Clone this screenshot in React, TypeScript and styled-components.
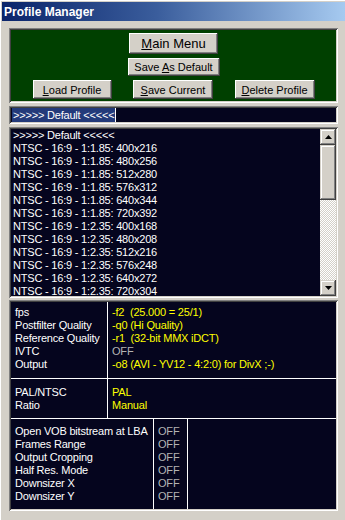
import React from 'react'
import styled, { createGlobalStyle } from 'styled-components'

const GlobalStyle = createGlobalStyle`
  html, body {
    margin: 0;
    padding: 0;
    background: #d4d0c8;
  }
  body {
    font-family: 'Liberation Sans', Arial, sans-serif;
  }
`

const sunken = `
  box-shadow: inset 1px 1px #808080, inset -1px -1px #ffffff,
    inset 2px 2px #404040, inset -2px -2px #d4d0c8;
`

const Window = styled.div`
  width: 345px;
  height: 520px;
  box-sizing: border-box;
  padding: 2px 0 0 2px;
  background: #d4d0c8;
  box-shadow: inset 1px 1px #ffffff;
  overflow: hidden;
  display: flex;
  flex-direction: column;
`

const TitleBar = styled.div`
  height: 19px;
  flex: none;
  display: flex;
  align-items: center;
  padding-left: 2px;
  background: linear-gradient(90deg, #0a246a 0%, #3a5d9c 45%, #a6caf0 100%);
  color: #ffffff;
  font-weight: bold;
  font-size: 12px;
`

const Body = styled.div`
  display: flex;
  flex-direction: column;
  gap: 3px;
  padding: 7px 7px 0 7px;
`

const GreenPanel = styled.div`
  height: 75px;
  box-sizing: border-box;
  padding: 5px 2px 4px;
  background: #004000;
  ${sunken}
  display: flex;
  flex-direction: column;
  align-items: center;
  gap: 4px;
`

const ButtonRow = styled.div`
  width: 100%;
  display: flex;
  justify-content: space-evenly;
`

const Button = styled.button<{ $w: number; $h: number; $big?: boolean }>`
  width: ${p => p.$w}px;
  height: ${p => p.$h}px;
  padding: 0;
  border: none;
  background: #d4d0c8;
  color: #000000;
  font-family: 'Liberation Sans', Arial, sans-serif;
  font-size: ${p => (p.$big ? 13 : 11)}px;
  box-shadow: inset -1px -1px #404040, inset 1px 1px #ffffff,
    inset -2px -2px #808080, inset 2px 2px #d4d0c8;
  display: flex;
  align-items: center;
  justify-content: center;
`

const EditField = styled.div`
  height: 18px;
  box-sizing: border-box;
  padding: 2px 0 0 3px;
  background: #05051e;
  ${sunken}
  display: flex;
  align-items: flex-start;
  font-size: 11px;
  line-height: 14px;
  letter-spacing: -0.2px;
  color: #ffffff;
`

const Selection = styled.span`
  background: #233a7a;
  padding: 0 1px;
  white-space: pre;
`

const Caret = styled.span`
  width: 1px;
  height: 14px;
  background: #ffffff;
`

const ListBox = styled.div`
  height: 171px;
  box-sizing: border-box;
  padding: 2px;
  background: #05051e;
  ${sunken}
  display: flex;
`

const Items = styled.div`
  flex: 1;
  overflow: hidden;
  padding-left: 2px;
`

const Item = styled.div`
  font-size: 11px;
  line-height: 13px;
  letter-spacing: -0.2px;
  color: #ffffff;
  white-space: pre;
`

const ScrollBar = styled.div`
  width: 16px;
  display: flex;
  flex-direction: column;
  background: repeating-conic-gradient(#ffffff 0 25%, #d4d0c8 0 50%) 0 0 / 2px 2px;
`

const ScrollButton = styled.div<{ $h: number }>`
  height: ${p => p.$h}px;
  flex: none;
  background: #d4d0c8;
  box-shadow: inset -1px -1px #404040, inset 1px 1px #d4d0c8,
    inset -2px -2px #808080, inset 2px 2px #ffffff;
  display: flex;
  align-items: center;
  justify-content: center;
`

const Track = styled.div`
  flex: 1;
`

const InfoPanel = styled.div`
  height: 211px;
  box-sizing: border-box;
  padding: 2px;
  margin-top: -1px;
  background: #05051e;
  ${sunken}
  display: flex;
  flex-direction: column;
`

const Section = styled.div<{ $cols: string; $divider?: boolean }>`
  display: grid;
  grid-template-columns: ${p => p.$cols};
  border-bottom: ${p => (p.$divider ? '1px solid #ffffff' : 'none')};
`

const Cell = styled.div<{ $pt: number; $pb: number; $line?: boolean }>`
  padding: ${p => p.$pt}px 0 ${p => p.$pb}px 4px;
  border-right: ${p => (p.$line ? '1px solid #ffffff' : 'none')};
`

const Line = styled.div<{ $tone?: 'label' | 'value' | 'off' }>`
  font-size: 11px;
  line-height: 13px;
  letter-spacing: -0.2px;
  white-space: pre;
  color: ${p =>
    p.$tone === 'value' ? '#ffff00' : p.$tone === 'off' ? '#b4b4b4' : '#ffffff'};
`

const Arrow = ({ up }: { up?: boolean }) => (
  <svg width="7" height="4" viewBox="0 0 7 4">
    <polygon points={up ? '3.5,0 7,4 0,4' : '0,0 7,0 3.5,4'} fill="#000" />
  </svg>
)

const listItems = [
  '>>>>> Default <<<<<',
  'NTSC - 16:9 - 1:1.85: 400x216',
  'NTSC - 16:9 - 1:1.85: 480x256',
  'NTSC - 16:9 - 1:1.85: 512x280',
  'NTSC - 16:9 - 1:1.85: 576x312',
  'NTSC - 16:9 - 1:1.85: 640x344',
  'NTSC - 16:9 - 1:1.85: 720x392',
  'NTSC - 16:9 - 1:2.35: 400x168',
  'NTSC - 16:9 - 1:2.35: 480x208',
  'NTSC - 16:9 - 1:2.35: 512x216',
  'NTSC - 16:9 - 1:2.35: 576x248',
  'NTSC - 16:9 - 1:2.35: 640x272',
  'NTSC - 16:9 - 1:2.35: 720x304',
]

type Setting = { label: string; value: string; off?: boolean }

const encoding: Setting[] = [
  { label: 'fps', value: '-f2  (25.000 = 25/1)' },
  { label: 'Postfilter Quality', value: '-q0 (Hi Quality)' },
  { label: 'Reference Quality', value: '-r1  (32-bit MMX iDCT)' },
  { label: 'IVTC', value: 'OFF', off: true },
  { label: 'Output', value: '-o8 (AVI - YV12 - 4:2:0) for DivX ;-)' },
]

const video: Setting[] = [
  { label: 'PAL/NTSC', value: 'PAL' },
  { label: 'Ratio', value: 'Manual' },
]

const options = [
  'Open VOB bitstream at LBA',
  'Frames Range',
  'Output Cropping',
  'Half Res. Mode',
  'Downsizer X',
  'Downsizer Y',
]

const App = () => {
  return (
    <Window>
      <GlobalStyle />
      <TitleBar>Profile Manager</TitleBar>
      <Body>
        <GreenPanel>
          <Button $w={89} $h={21} $big>
            <span>
              <u>M</u>ain Menu
            </span>
          </Button>
          <Button $w={92} $h={18}>
            <span>
              Save <u>A</u>s Default
            </span>
          </Button>
          <ButtonRow>
            <Button $w={79} $h={19}>
              <span>
                <u>L</u>oad Profile
              </span>
            </Button>
            <Button $w={80} $h={19}>
              <span>
                <u>S</u>ave Current
              </span>
            </Button>
            <Button $w={80} $h={19}>
              <span>
                <u>D</u>elete Profile
              </span>
            </Button>
          </ButtonRow>
        </GreenPanel>

        <EditField>
          <Selection>{'>>>>> Default <<<<<'}</Selection>
          <Caret />
        </EditField>

        <ListBox>
          <Items>
            {listItems.map((item, i) => (
              <Item key={i}>{item}</Item>
            ))}
          </Items>
          <ScrollBar>
            <ScrollButton $h={16}>
              <Arrow up />
            </ScrollButton>
            <ScrollButton $h={55} />
            <Track />
            <ScrollButton $h={16}>
              <Arrow />
            </ScrollButton>
          </ScrollBar>
        </ListBox>

        <InfoPanel>
          <Section $cols="97px 1fr" $divider>
            <Cell $pt={4} $pb={7} $line>
              {encoding.map(s => (
                <Line key={s.label}>{s.label}</Line>
              ))}
            </Cell>
            <Cell $pt={4} $pb={7}>
              {encoding.map(s => (
                <Line key={s.label} $tone={s.off ? 'off' : 'value'}>
                  {s.value}
                </Line>
              ))}
            </Cell>
          </Section>
          <Section $cols="97px 1fr" $divider>
            <Cell $pt={7} $pb={6} $line>
              {video.map(s => (
                <Line key={s.label}>{s.label}</Line>
              ))}
            </Cell>
            <Cell $pt={7} $pb={6}>
              {video.map(s => (
                <Line key={s.label} $tone="value">
                  {s.value}
                </Line>
              ))}
            </Cell>
          </Section>
          <Section $cols="143px 34px 1fr">
            <Cell $pt={6} $pb={6} $line>
              {options.map(label => (
                <Line key={label}>{label}</Line>
              ))}
            </Cell>
            <Cell $pt={6} $pb={6} $line>
              {options.map(label => (
                <Line key={label} $tone="off">
                  OFF
                </Line>
              ))}
            </Cell>
            <Cell $pt={6} $pb={6} />
          </Section>
        </InfoPanel>
      </Body>
    </Window>
  )
}

export default App
